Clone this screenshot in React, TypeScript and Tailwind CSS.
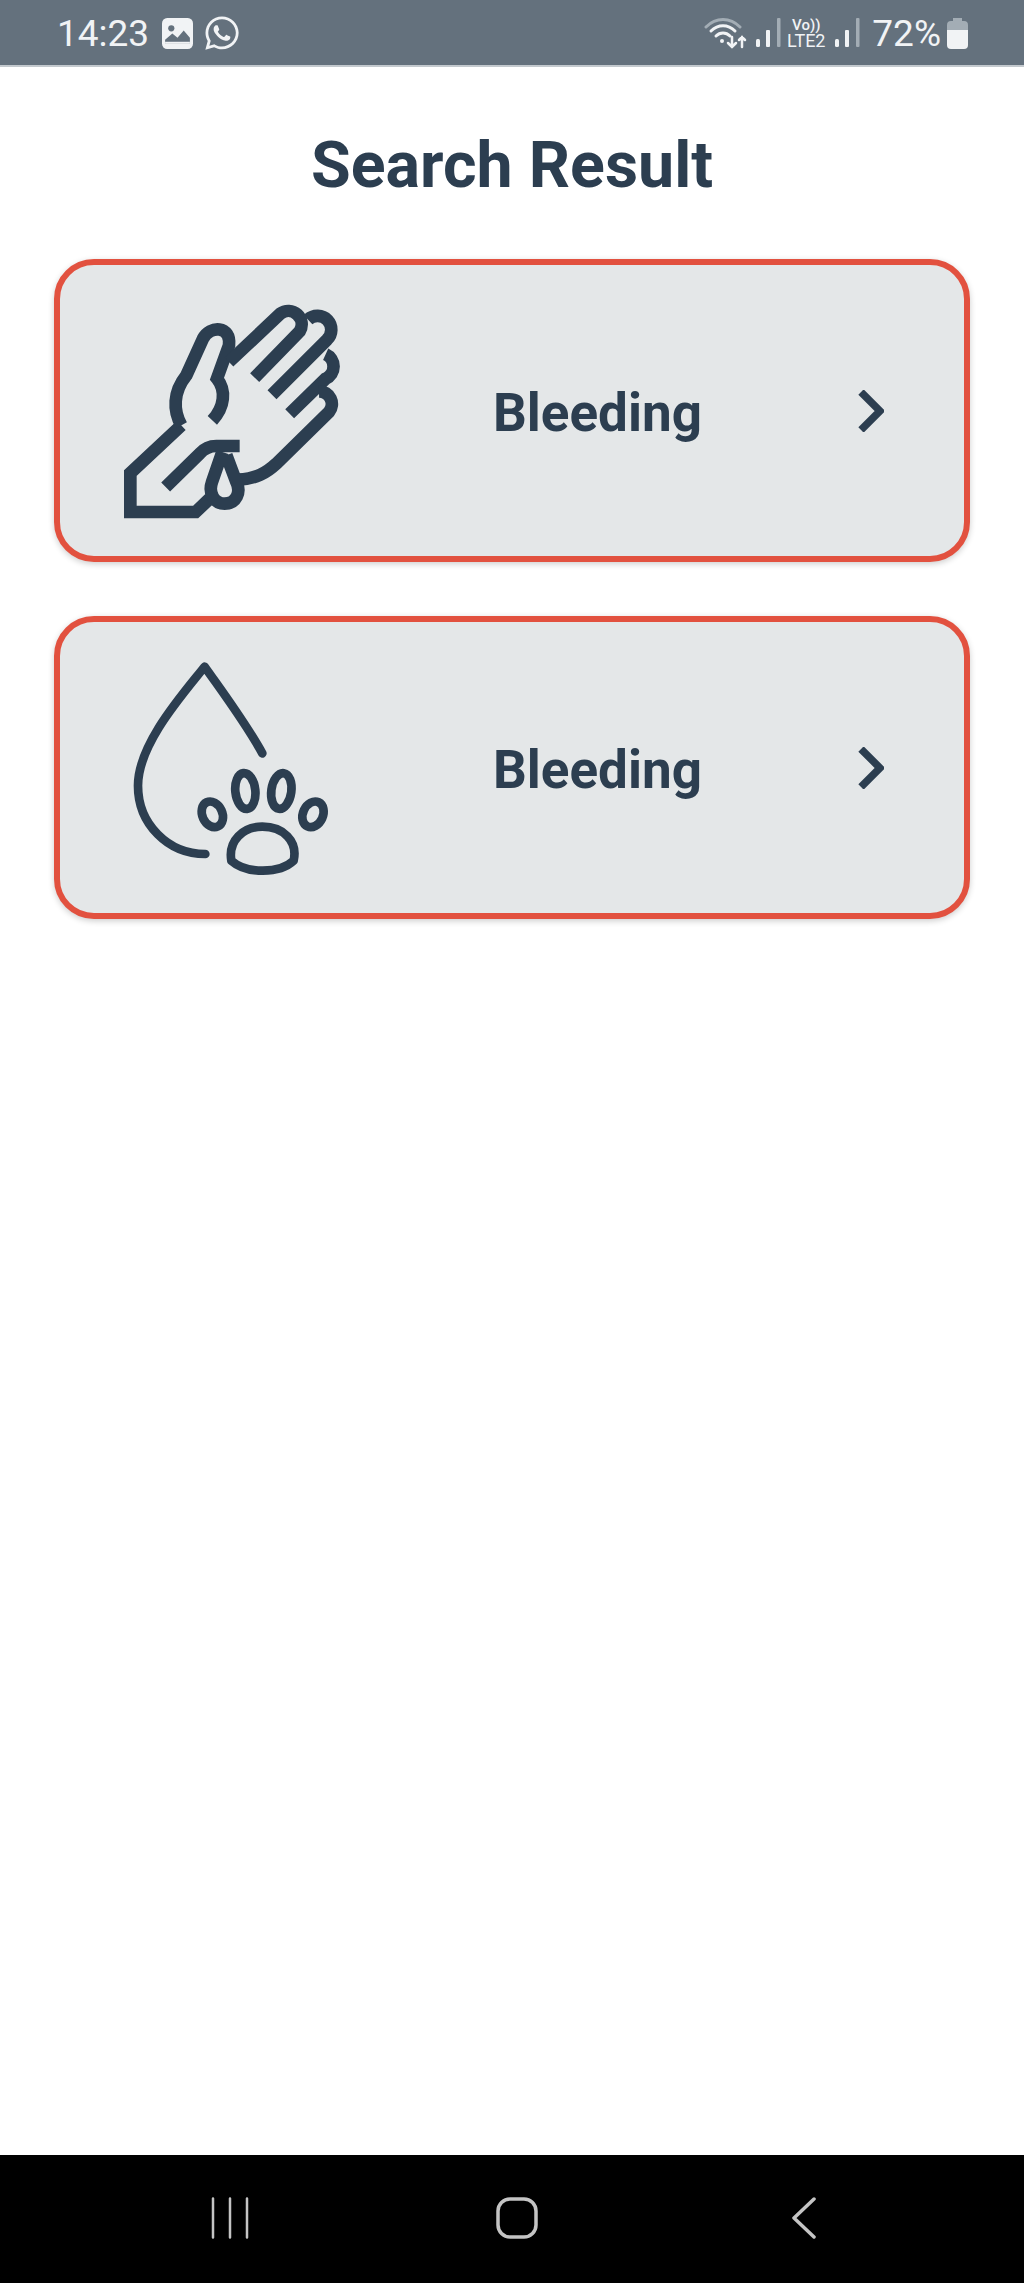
import React from 'react';
import { FaWhatsapp } from 'react-icons/fa';

const roboto = { fontFamily: 'Roboto, sans-serif' };

const SignalBars: React.FC = () => (
  <svg width="26" height="30" viewBox="0 0 26 30" className="block">
    <rect x="0" y="21" width="4" height="8" rx="1.5" fill="#f1f3f5" />
    <rect x="10" y="12" width="4" height="17" rx="1" fill="#f1f3f5" />
    <rect x="21" y="0" width="3.5" height="29" rx="1" fill="#a3adb5" />
  </svg>
);

const StatusBar: React.FC = () => (
  <div className="h-[67px] shrink-0 flex items-center justify-between pl-[57px] pr-[56px] pt-[1px] bg-[#64717d] border-b-2 border-b-[#c3c9ce] text-[#f1f3f5]">
    <div className="flex items-center">
      <span className="text-[37px] leading-none" style={roboto}>14:23</span>
      <svg width="31" height="31" viewBox="0 0 30 30" className="ml-[13px]">
        <rect width="30" height="30" rx="5" fill="#f1f3f5" />
        <circle cx="9" cy="10" r="3" fill="#64717d" />
        <path d="M3 25 L3 21 L10 15 L15 19 L21 12 L27 19 L27 25 Z" fill="#64717d" />
        <path d="M3 25 L27 25 L27 23 L3 23 Z" fill="#f1f3f5" />
      </svg>
      <FaWhatsapp className="ml-[10px] text-[38px]" />
    </div>
    <div className="flex items-center">
      <svg width="44" height="34" viewBox="0 0 44 34" fill="none" strokeLinecap="round">
        <path d="M2 11 C12 1 26 1 36 11" stroke="#a3adb5" strokeWidth="3" />
        <path d="M7 15 C14 8 24 8 31 15" stroke="#f1f3f5" strokeWidth="3" />
        <path d="M12 20 C16 16 22 16 26 20" stroke="#f1f3f5" strokeWidth="3" />
        <circle cx="18" cy="25" r="2" fill="#f1f3f5" />
        <path d="M28 21 V31 M24 27 L28 31 L32 27" stroke="#f1f3f5" strokeWidth="2.5" />
        <path d="M38 31 V21 M35 24 L38 21 L41 24" stroke="#f1f3f5" strokeWidth="2.5" />
      </svg>
      <div className="ml-[8px]"><SignalBars /></div>
      <div className="ml-[5px] w-[38px] flex flex-col items-center leading-none" style={roboto}>
        <span className="text-[15px] leading-[14px] font-medium">Vo))</span>
        <span className="text-[18px] leading-[17px]">LTE2</span>
      </div>
      <div className="ml-[10px]"><SignalBars /></div>
      <span className="ml-[11px] text-[37px] leading-none" style={roboto}>72%</span>
      <svg width="21" height="31" viewBox="0 0 21 31" className="ml-[6px]">
        <path d="M6 0 H15 V3 H17 Q21 3 21 7 V12 H0 V7 Q0 3 4 3 H6 Z" fill="#a3adb5" />
        <path d="M0 12 H21 V27 Q21 31 17 31 H4 Q0 31 0 27 Z" fill="#f1f3f5" />
      </svg>
    </div>
  </div>
);

const HandIcon: React.FC = () => (
  <svg width="217" height="218" viewBox="250 155 651 654" fill="none" stroke="#2c3e50" strokeWidth="38">
    <path d="M425 525 L272 668 V785 H468 L510 745" />
    <path d="M425 525 C400 480 400 425 440 375 L490 265 C510 225 575 225 568 285 L532 385 C560 420 555 470 518 510" />
    <path d="M568 335 L722 190 A40 40 0 0 1 780 243 L645 382" />
    <path d="M805 208 A40 40 0 0 1 862 268 L697 433" />
    <path d="M858 312 A40 40 0 0 1 858 385 L750 490" />
    <path d="M838 423 A38 38 0 0 1 868 485 L710 640 C680 668 650 685 595 688" />
    <path d="M378 710 L480 610 C495 593 510 587 530 587 H600" />
    <path d="M548 605 L517 695 C505 730 525 760 555 760 C590 760 605 725 590 695 L560 615" />
  </svg>
);

const PawIcon: React.FC = () => (
  <svg width="217" height="218" viewBox="250 145 651 654" fill="none" stroke="#2c3e50" strokeWidth="26" strokeLinecap="round" strokeLinejoin="round">
    <path d="M668 428 C620 340 560 260 495 168 C430 250 295 400 295 525 C295 640 385 730 497 730" />
    <ellipse cx="617" cy="541" rx="30" ry="54" transform="rotate(-6 617 541)" />
    <ellipse cx="725" cy="541" rx="30" ry="54" transform="rotate(8 725 541)" />
    <ellipse cx="518" cy="611" rx="30" ry="40" transform="rotate(-25 518 611)" />
    <ellipse cx="820" cy="611" rx="30" ry="40" transform="rotate(25 820 611)" />
    <path d="M575 750 C565 690 610 648 668 648 C730 648 775 690 762 750 C720 790 620 790 575 750 Z" />
  </svg>
);

const ResultCard: React.FC<{ icon: React.ReactNode }> = ({ icon }) => (
  <div className="h-[303px] flex items-center pl-[63px] rounded-[40px] border-[6px] border-[#e2513f] bg-[#e4e7e8] shadow-[0_2px_6px_rgba(0,0,0,0.2)]">
    {icon}
    <span className="ml-[153px] w-[365px] text-[53px] leading-none font-bold text-[#2c3e50] pt-[6px]" style={roboto}>Bleeding</span>
    <svg width="26" height="42" viewBox="0 0 26 42" fill="none" stroke="#2c3e50" strokeWidth="7.5">
      <path d="M3 2 L22 21 L3 40" />
    </svg>
  </div>
);

const NavBar: React.FC = () => (
  <div className="h-[128px] shrink-0 bg-black grid grid-cols-3 pl-[86px] pr-[76px] pb-[44px] items-end justify-items-center">
    <svg width="40" height="42" viewBox="0 0 40 42" stroke="#c4c4c4" strokeWidth="2.5" strokeLinecap="round">
      <path d="M3 1.5 V40.5 M20 1.5 V40.5 M37 1.5 V40.5" />
    </svg>
    <svg width="42" height="42" viewBox="0 0 42 42" fill="none" stroke="#c4c4c4" strokeWidth="3.5">
      <rect x="2" y="2" width="38" height="38" rx="12" />
    </svg>
    <svg width="28" height="42" viewBox="0 0 28 42" fill="none" stroke="#c4c4c4" strokeWidth="3.5" strokeLinecap="round" strokeLinejoin="round">
      <path d="M24 2 L4 21 L24 40" />
    </svg>
  </div>
);

export default function App() {
  return (
    <div className="h-[2283px] flex flex-col bg-white">
      <StatusBar />
      <div className="flex-1 px-[54px]">
        <h1 className="mt-[64px] mb-[60px] text-center text-[64.5px] leading-[68px] font-bold text-[#2c3e50]" style={roboto}>Search Result</h1>
        <div className="flex flex-col gap-[54px]">
          <ResultCard icon={<HandIcon />} />
          <ResultCard icon={<PawIcon />} />
        </div>
      </div>
      <NavBar />
    </div>
  );
}
